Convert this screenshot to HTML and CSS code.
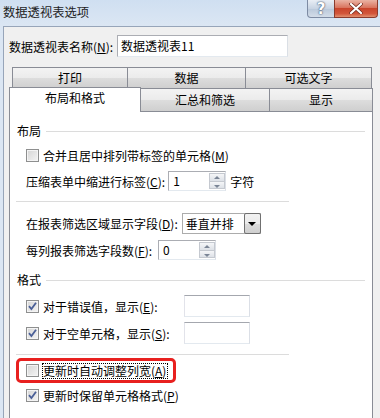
FILE: index.html
```html
<!DOCTYPE html>
<html lang="zh-CN">
<head>
  <meta charset="UTF-8" />
  <title>数据透视表选项</title>
  <link rel="stylesheet" href="styles.css">
</head>
<body>
  <div class="window">
    <div class="titlebar">
      <span class="title">数据透视表选项</span>
      <div class="caption-buttons">
        <span class="btn-help">?</span>
        <span class="btn-close">
          <svg width="14" height="11" viewBox="0 0 14 11">
            <path d="M2 1 L12 10 M12 1 L2 10" stroke="#6e2a1e" stroke-width="3.6" stroke-linecap="round"/>
            <path d="M2 1 L12 10 M12 1 L2 10" stroke="#fff" stroke-width="2.2" stroke-linecap="round"/>
          </svg>
        </span>
      </div>
    </div>

    <div class="client">
      <div class="name-row">
        <span class="label">数据透视表名称(<u>N</u>):</span>
        <div class="textbox name-box">数据透视表11</div>
      </div>

      <div class="tabs">
        <div class="tab-row row-back">
          <div class="tab w1">打印</div>
          <div class="tab w2">数据</div>
          <div class="tab w3">可选文字</div>
        </div>
        <div class="tab-row row-front">
          <div class="tab active w4">布局和格式</div>
          <div class="tab w5">汇总和筛选</div>
          <div class="tab w6">显示</div>
        </div>
      </div>

      <div class="panel">
        <div class="group-title t-layout"><span>布局</span><i class="rule"></i></div>

        <div class="row cb-row r-merge">
          <span class="checkbox"></span>
          <span>合并且居中排列带标签的单元格(<u>M</u>)</span>
        </div>

        <div class="row field-row r-indent">
          <span>压缩表单中缩进行标签(<u>C</u>):</span>
          <div class="spin spin-indent">
            <span class="spin-value">1</span>
            <span class="spin-buttons"><b class="up"></b><b class="down"></b></span>
          </div>
          <span class="unit">字符</span>
        </div>

        <div class="separator s1"></div>

        <div class="row field-row r-order">
          <span>在报表筛选区域显示字段(<u>D</u>):</span>
          <div class="combo">
            <span class="combo-value">垂直并排</span>
            <span class="combo-button"><b></b></span>
          </div>
        </div>

        <div class="row field-row r-count">
          <span>每列报表筛选字段数(<u>F</u>):</span>
          <div class="spin spin-count">
            <span class="spin-value">0</span>
            <span class="spin-buttons"><b class="up"></b><b class="down"></b></span>
          </div>
        </div>

        <div class="group-title t-format"><span>格式</span><i class="rule"></i></div>

        <div class="row cb-row r-error">
          <span class="checkbox checked"></span>
          <span class="cb-label">对于错误值，显示(<u>E</u>):</span>
          <div class="textbox value-box"></div>
        </div>

        <div class="row cb-row r-empty">
          <span class="checkbox checked"></span>
          <span class="cb-label">对于空单元格，显示(<u>S</u>):</span>
          <div class="textbox value-box"></div>
        </div>

        <div class="separator s2"></div>

        <div class="highlight">
          <div class="row cb-row">
            <span class="checkbox"></span>
            <span class="focus">更新时自动调整列宽(<u>A</u>)</span>
          </div>
        </div>

        <div class="row cb-row r-keep">
          <span class="checkbox checked"></span>
          <span>更新时保留单元格格式(<u>P</u>)</span>
        </div>
      </div>
    </div>
  </div>
</body>
</html>
```

FILE: styles.css
```css
* {
  box-sizing: border-box;
}

body {
  margin: 0;
  width: 380px;
  height: 418px;
  overflow: hidden;
  font-family: "Noto Sans CJK SC", "Microsoft YaHei", sans-serif;
  font-size: 12px;
  color: #000;
  background: #d4e1f0;
}

u {
  text-decoration: underline;
  text-underline-offset: 1px;
}

.window {
  height: 418px;
  display: flex;
  flex-direction: column;
  background: linear-gradient(#cfdff1, #dbe6f3 25px);
}

/* title bar */
.titlebar {
  height: 26px;
  flex: none;
  display: flex;
  justify-content: space-between;
  align-items: flex-start;
}

.title {
  padding: 4px 0 0 3px;
  line-height: 16px;
  font-size: 12.3px;
  color: #1e1e1e;
}

.caption-buttons {
  display: flex;
  margin-right: 2px;
}

.btn-help,
.btn-close {
  height: 18px;
  display: flex;
  align-items: center;
  justify-content: center;
  border: 1px solid #7d8ba3;
  border-top: none;
}

.btn-help {
  width: 28px;
  border-bottom-left-radius: 4px;
  background: linear-gradient(#e9eef5, #c8d4e3 50%, #b9c8da 51%, #d3dde9);
  color: #fff;
  font: bold 15px "DejaVu Sans", sans-serif;
  text-shadow: 0 0 2px #3d4f6a, 0 0 1px #3d4f6a;
}

.btn-close {
  width: 44px;
  margin-left: -1px;
  border-color: #8a3b2d;
  border-bottom-right-radius: 4px;
  background: linear-gradient(#eab3a4, #d9745e 45%, #c9452c 50%, #d2563b 80%, #e1906f);
}

/* client area */
.client {
  flex: 1;
  margin-left: 3px;
  border-left: 1px solid #97a5b9;
  border-top: 1px solid #97a5b9;
  background: #f0f0f0;
  padding-left: 5px;
  display: flex;
  flex-direction: column;
}

.name-row {
  display: flex;
  align-items: center;
  margin-top: 8px;
  height: 22px;
}

.name-row .label {
  width: 108px;
}

.textbox {
  background: #fff;
  border: 1px solid #abadb3;
  border-top-color: #a4a7ae;
  border-right-color: #dbdfe6;
  border-bottom-color: #e3e9ef;
  border-left-color: #e2e3ea;
}

.name-box {
  width: 171px;
  height: 22px;
  line-height: 20px;
  padding-left: 3px;
  border: 1px solid #abadb3;
  border-right-color: #dadfe5;
  border-bottom-color: #e3e9ef;
}

/* tabs */
.tabs {
  margin-top: 10px;
  display: flex;
  flex-direction: column;
}

.tab-row {
  display: flex;
}

.row-back {
  margin-left: 3px;
  height: 21px;
}

.row-front {
  height: 23px;
}

.tab {
  border: 1px solid #898c95;
  border-bottom: none;
  margin-left: -1px;
  text-align: center;
  line-height: 20px;
  background: linear-gradient(#f3f3f3, #ebebeb 50%, #dddddd 51%, #cfcfcf);
}

.tab:first-child {
  margin-left: 0;
}

.row-front .tab {
  line-height: 21px;
}

.tab.active {
  position: relative;
  z-index: 1;
  height: 25px;
  margin-top: -1px;
  background: #fff;
  line-height: 20px;
}

.w1 { width: 116px; }
.w2 { width: 119px; }
.w3 { width: 127px; }
.w4 { width: 132px; }
.w5 { width: 130px; }
.w6 { width: 104px; }

/* panel */
.panel {
  width: 364px;
  flex: 1;
  border: 1px solid #898c95;
  border-bottom: none;
  background: #fff;
  padding-left: 7px;
  display: flex;
  flex-direction: column;
}

.group-title {
  display: flex;
  align-items: center;
  height: 16px;
  line-height: 16px;
}

.group-title .rule {
  flex: none;
  width: 319px;
  margin-left: 5px;
  height: 1px;
  background: #dcdcdc;
}

.t-layout { margin-top: 11px; }
.t-format { margin-top: 12px; }

.row {
  display: flex;
  align-items: center;
  margin-left: 9px;
  white-space: nowrap;
}

.cb-row {
  height: 14px;
}

.field-row {
  height: 20px;
}

.r-merge { margin-top: 9px; }
.r-indent { margin-top: 9px; }
.r-order { margin-top: 11px; height: 21px; }
.r-count { margin-top: 6px; }
.r-error { margin-top: 7px; height: 22px; }
.r-empty { margin-top: 5px; height: 22px; }
.r-keep { margin-top: 5px; }

.separator {
  height: 1px;
  width: 273px;
  margin-left: -1px;
  background: #dcdcdc;
}

.s1 { margin-top: 10px; }
.s2 { margin-top: 10px; }

/* checkbox */
.checkbox {
  flex: none;
  width: 13px;
  height: 13px;
  margin-right: 4px;
  border: 1px solid #8e8f8f;
  background: linear-gradient(135deg, #d5d5d5, #f4f4f4);
  box-shadow: inset 0 0 0 1px #f4f4f4;
}

.checkbox.checked {
  background: url("data:image/svg+xml,%3Csvg xmlns='http://www.w3.org/2000/svg' width='11' height='11' viewBox='0 0 11 11'%3E%3Cpath d='M2 5.2 L4.4 8 L9 1.8' fill='none' stroke='%234a5f97' stroke-width='1.8'/%3E%3C/svg%3E") center no-repeat,
    linear-gradient(135deg, #d5d5d5, #f4f4f4);
}

.cb-label {
  width: 141px;
}

.value-box {
  width: 66px;
  height: 22px;
}

/* spin and combo */
.spin {
  display: flex;
  height: 20px;
  margin-left: 3px;
  border: 1px solid #abadb3;
  border-right-color: #dbdfe6;
  border-bottom-color: #e3e9ef;
  background: #fff;
}

.spin-indent { width: 58px; }
.spin-count { width: 58px; margin-left: 6px; }

.spin-value {
  flex: 1;
  padding-left: 4px;
  line-height: 18px;
}

.spin-buttons {
  width: 16px;
  display: flex;
  flex-direction: column;
  padding: 1px 0 1px 0;
}

.spin-buttons b {
  flex: 1;
  position: relative;
  border: 1px solid #c5c9d0;
  background: linear-gradient(#f5f6f8, #dde1e7);
}

.spin-buttons b + b {
  margin-top: -1px;
}

.spin-buttons b::after {
  content: "";
  position: absolute;
  left: 4px;
  top: 2px;
  border-left: 3px solid transparent;
  border-right: 3px solid transparent;
}

.spin-buttons .up::after {
  border-bottom: 3px solid #7b8596;
}

.spin-buttons .down::after {
  top: 3px;
  border-top: 3px solid #7b8596;
}

.unit {
  margin-left: 4px;
}

.combo {
  display: flex;
  width: 79px;
  height: 21px;
  margin-left: 4px;
  border: 1px solid #acacac;
  background: #fff;
}

.combo-value {
  flex: 1;
  padding-left: 3px;
  line-height: 19px;
}

.combo-button {
  width: 17px;
  border: 1px solid #707070;
  border-radius: 2px;
  margin: -1px -1px -1px 0;
  background: linear-gradient(#f2f2f2, #ebebeb 50%, #dddddd 51%, #cfcfcf);
  display: flex;
  align-items: center;
  justify-content: center;
}

.combo-button b {
  border-left: 4px solid transparent;
  border-right: 4px solid transparent;
  border-top: 4px solid #000;
  margin-top: 1px;
}

/* annotation */
.highlight {
  margin-top: 3px;
  margin-left: -1px;
  width: 160px;
  height: 25px;
  border: 3px solid #e8201f;
  border-radius: 5px;
  display: flex;
  align-items: center;
}

.highlight .row {
  margin-left: 7px;
}

.focus {
  outline: 1px dotted #000;
  outline-offset: 0;
  padding: 0 1px 0 0;
  line-height: 14px;
}
```
